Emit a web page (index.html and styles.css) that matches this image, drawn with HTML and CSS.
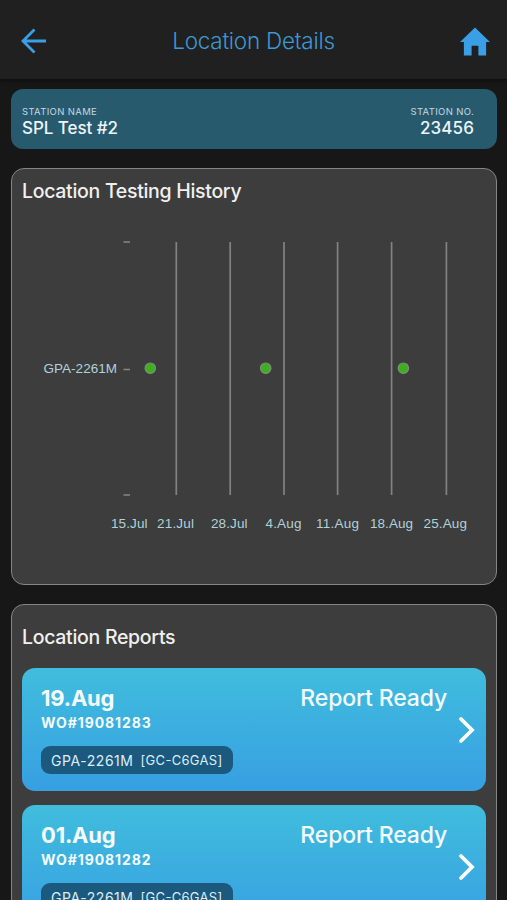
FILE: index.html
```html
<!DOCTYPE html>
<html lang="en">
<head>
<meta charset="utf-8">
<title>Location Details</title>
<link rel="stylesheet" href="styles.css">
</head>
<body>
<div class="app">
  <header class="topbar">
    <svg class="back" width="26" height="26" viewBox="0 0 26 26"><path d="M25 13H2M13.500 1.500L2 13l11.500 11.500"/></svg>
    <h1>Location Details</h1>
    <svg class="home" width="30" height="29" viewBox="0 0 31 29"><path d="M15.500 0L31 15H27V29H19V19H12V29H4V15H0Z"/></svg>
  </header>
  <main>
    <section class="station">
      <div><div class="label">STATION NAME</div><div class="value">SPL Test #2</div></div>
      <div class="right"><div class="label">STATION NO.</div><div class="value number">23456</div></div>
    </section>
    <section class="card history">
      <h2>Location Testing History</h2>
      <svg class="chart" width="484" height="340" viewBox="12 210 484 340">
        <g class="ticks"><path d="M123.500 242H130M123.500 369.500H130M123.500 495H130"/></g>
        <g class="grid"><path d="M176.300 242V495M230.200 242V495M284 242V495M337.600 242V495M391.600 242V495M446.400 242V495"/></g>
        <g class="dots"><circle cx="150.300" cy="368.200" r="5.200"/><circle cx="265.700" cy="368.200" r="5.200"/><circle cx="403.400" cy="368.200" r="5.200"/></g>
        <g class="axis">
          <text x="43.500" y="373" textLength="73.500">GPA-2261M</text>
          <text x="111" y="528" textLength="36.500">15.Jul</text>
          <text x="157" y="528" textLength="37">21.Jul</text>
          <text x="211" y="528" textLength="36.500">28.Jul</text>
          <text x="265.500" y="528" textLength="36">4.Aug</text>
          <text x="316" y="528" textLength="43">11.Aug</text>
          <text x="370" y="528" textLength="43">18.Aug</text>
          <text x="423.500" y="528" textLength="43.500">25.Aug</text>
        </g>
      </svg>
    </section>
    <section class="card reports">
      <h2 class="reports-title">Location Reports</h2>
      <article class="report">
        <div><div class="date">19.Aug</div><div class="order">WO#19081283</div><div class="tag"><span>GPA-2261M</span><small>[GC-C6GAS]</small></div></div>
        <div class="status">Report Ready</div>
        <svg class="chevron" width="18" height="28" viewBox="0 0 18 28"><path d="M3 3L14 14L3 25"/></svg>
      </article>
      <article class="report">
        <div><div class="date">01.Aug</div><div class="order">WO#19081282</div><div class="tag"><span>GPA-2261M</span><small>[GC-C6GAS]</small></div></div>
        <div class="status">Report Ready</div>
        <svg class="chevron" width="18" height="28" viewBox="0 0 18 28"><path d="M3 3L14 14L3 25"/></svg>
      </article>
    </section>
  </main>
</div>
</body>
</html>
```
FILE: styles.css
```css
* { box-sizing: border-box; }
body { margin: 0; background: #171717; font-family: Inter, sans-serif; color: #f0f0f0; }
h1, h2 { margin: 0; }
.app { height: 900px; overflow: hidden; }
.topbar { height: 79px; background: #202020; display: flex; align-items: center; justify-content: space-between; padding: 3px 17px 0 21px; box-shadow: 0 1px 4px #0b0b0b; }
.topbar h1 { font-size: 22.5px; line-height: 28px; font-weight: 300; color: #3d98d3; letter-spacing: -.25px; }
.back { fill: none; stroke: #3a9fe5; stroke-width: 2.8; }
.home { fill: #3a9fe5; }
main { padding: 10px 10px 0 11px; }
.station { height: 60px; border-radius: 12px; background: #285a6e; display: flex; justify-content: space-between; padding: 16px 23px 0 11px; }
.right { text-align: right; }
.label { font-size: 9.5px; line-height: 13px; color: #c3d8e2; letter-spacing: .35px; }
.value { font-size: 17px; line-height: 21px; font-weight: 500; color: #edf5fa; letter-spacing: -.05px; }
.number { letter-spacing: .1px; }
.card { border: 1.500px solid #858585; border-radius: 13px; background: #3d3d3d; }
.history { height: 417px; margin-top: 19px; padding-top: 9px; }
.card h2 { font-size: 19.5px; line-height: 26px; font-weight: 500; padding-left: 10px; letter-spacing: -.3px; }
.chart { display: block; margin-top: 6px; }
.ticks path { stroke: #858585; stroke-width: 1.500; }
.grid path { stroke: #828282; stroke-width: 1.700; }
.dots { fill: #3fae20; stroke: #789572; stroke-width: 1.200; }
.axis { fill: #b0d2da; font: 13.5px "Liberation Sans", sans-serif; }
.reports { height: 360px; margin-top: 19px; padding: 19px 10px 0; }
.card .reports-title { padding-left: 0; margin-bottom: 18px; }
.report { height: 123px; border-radius: 13px; background: linear-gradient(#40bddd, #379fe2); display: grid; grid-template-columns: 1fr auto 40px; padding: 16px 0 0 19px; margin-bottom: 14px; color: #f5fcff; }
.date { font-size: 22px; line-height: 28px; font-weight: 700; letter-spacing: -.2px; }
.order { font-size: 14px; line-height: 20px; font-weight: 700; letter-spacing: .9px; position: relative; top: 1px; }
.tag { width: 192px; height: 28px; margin-top: 14px; border-radius: 9px; background: #1b597f; color: #dceef7; display: flex; align-items: center; padding-left: 10px; font-size: 14px; gap: 7px; letter-spacing: .55px; }
.tag small { font-size: 13px; letter-spacing: .3px; }
.status { font-size: 23px; line-height: 28px; font-weight: 500; letter-spacing: -.15px; margin-right: -1px; }
.chevron { margin: 32px 0 0 12px; fill: none; stroke: #fff; stroke-width: 3.800; stroke-linecap: round; }
```
